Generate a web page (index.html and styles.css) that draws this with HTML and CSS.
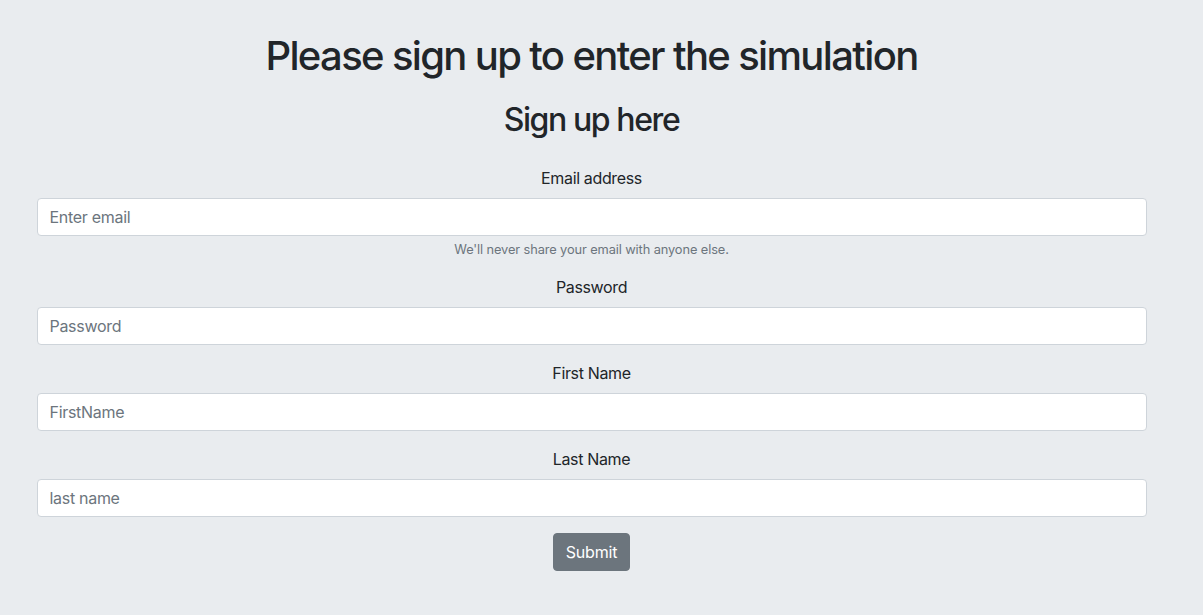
FILE: index.html
```html
<!DOCTYPE html>
<html lang="en">
<head>
<meta charset="utf-8">
<title>Sign up</title>
<link rel="stylesheet" href="styles.css">
</head>
<body>
<div class="page">
  <div class="container">
    <h1 class="title">Please sign up to enter the simulation</h1>
    <h2 class="subtitle">Sign up here</h2>
    <form class="signup">
      <div class="form-group">
        <label class="label" for="email">Email address</label>
        <input class="input" id="email" type="email" placeholder="Enter email">
        <small class="help">We'll never share your email with anyone else.</small>
      </div>
      <div class="form-group">
        <label class="label" for="password">Password</label>
        <input class="input" id="password" type="password" placeholder="Password">
      </div>
      <div class="form-group">
        <label class="label" for="first">First Name</label>
        <input class="input" id="first" type="text" placeholder="FirstName">
      </div>
      <div class="form-group">
        <label class="label" for="last">Last Name</label>
        <input class="input" id="last" type="text" placeholder="last name">
      </div>
      <div class="actions">
        <button class="btn" type="submit">Submit</button>
      </div>
    </form>
  </div>
</div>
</body>
</html>
```

FILE: styles.css
```css
html, body {
  margin: 0;
  padding: 0;
  background: #e9ecef;
}
body {
  font-family: Inter, "Noto Sans", "Liberation Sans", sans-serif;
  color: #212529;
  font-size: 16px;
  line-height: 1.5;
}
.page {
  width: 1183px;
  padding: 32px 0 40px;
  box-sizing: border-box;
}
.container {
  width: 1140px;
  margin: 0 auto;
  padding: 0 15px;
  box-sizing: border-box;
  text-align: center;
}
.title {
  font-size: 40px;
  font-weight: 500;
  line-height: 1.2;
  margin: 0 0 21px;
  letter-spacing: -1.65px;
}
.subtitle {
  font-size: 32px;
  font-weight: 500;
  line-height: 1.2;
  margin: 0 0 27px;
  letter-spacing: -1.4px;
}
.signup {
  display: flex;
  flex-direction: column;
}
.form-group {
  display: flex;
  flex-direction: column;
  margin-bottom: 16px;
}
.label {
  display: block;
  margin-bottom: 8px;
  line-height: 24px;
  letter-spacing: -0.35px;
}
.input {
  display: block;
  width: 100%;
  height: 38px;
  box-sizing: border-box;
  padding: 6px 12px;
  font-family: inherit;
  font-size: 16px;
  letter-spacing: -0.3px;
  color: #495057;
  background: #fff;
  border: 1px solid #ced4da;
  border-radius: 4px;
  outline: none;
}
.input::placeholder {
  color: #6c757d;
  opacity: 1;
}
.help {
  display: block;
  margin-top: 4px;
  font-size: 12.8px;
  line-height: 19px;
  letter-spacing: -0.1px;
  color: #6c757d;
}
.actions {
  display: flex;
  justify-content: center;
}
.btn {
  font-family: inherit;
  font-size: 16px;
  line-height: 24px;
  padding: 6px 12px;
  letter-spacing: -0.2px;
  color: #fff;
  background: #6c757d;
  border: 1px solid #6c757d;
  border-radius: 4px;
}
```
